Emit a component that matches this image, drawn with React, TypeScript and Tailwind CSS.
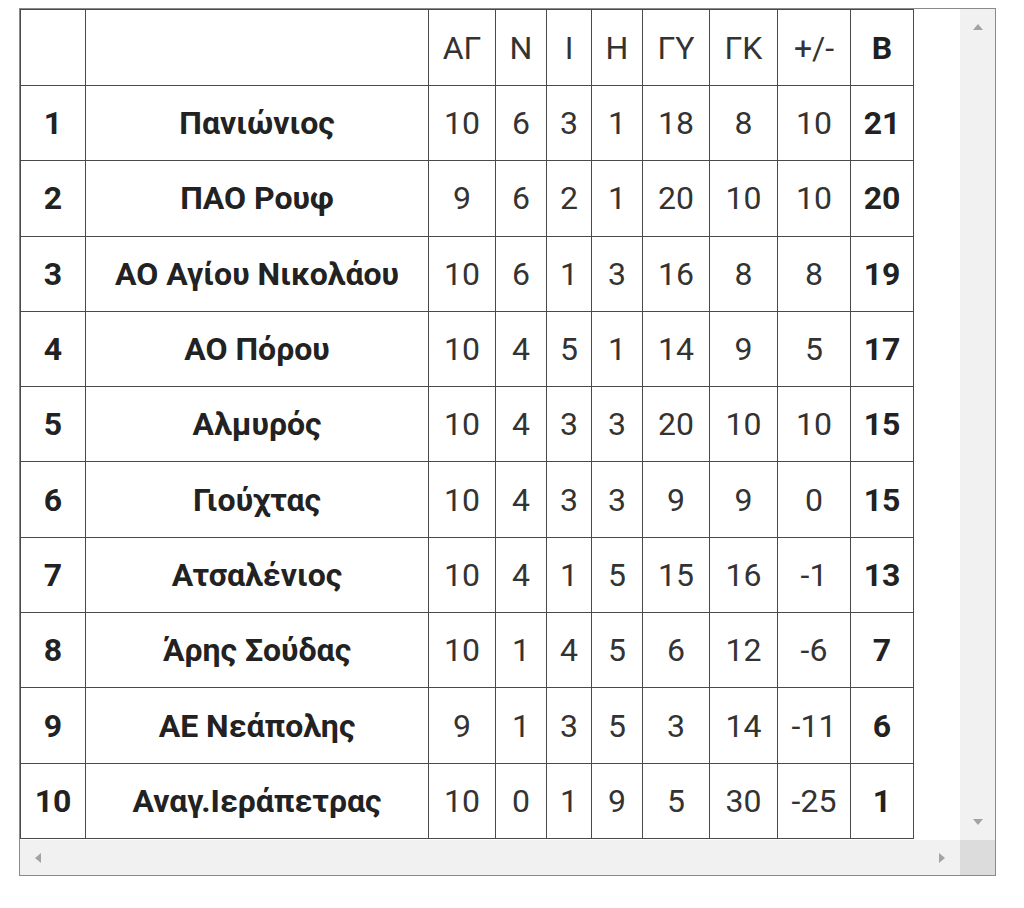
import React from "react";

const rows: [string, string, string, string, string, string, string, string, string, string][] = [
  ["1", "Πανιώνιος", "10", "6", "3", "1", "18", "8", "10", "21"],
  ["2", "ΠΑΟ Ρουφ", "9", "6", "2", "1", "20", "10", "10", "20"],
  ["3", "ΑΟ Αγίου Νικολάου", "10", "6", "1", "3", "16", "8", "8", "19"],
  ["4", "ΑΟ Πόρου", "10", "4", "5", "1", "14", "9", "5", "17"],
  ["5", "Αλμυρός", "10", "4", "3", "3", "20", "10", "10", "15"],
  ["6", "Γιούχτας", "10", "4", "3", "3", "9", "9", "0", "15"],
  ["7", "Ατσαλένιος", "10", "4", "1", "5", "15", "16", "-1", "13"],
  ["8", "Άρης Σούδας", "10", "1", "4", "5", "6", "12", "-6", "7"],
  ["9", "ΑΕ Νεάπολης", "9", "1", "3", "5", "3", "14", "-11", "6"],
  ["10", "Αναγ.Ιεράπετρας", "10", "0", "1", "9", "5", "30", "-25", "1"],
];

const widths = [65, 343, 67, 51, 45, 51, 67, 68, 73, 63];
const headers = ["", "", "ΑΓ", "Ν", "Ι", "Η", "ΓΥ", "ΓΚ", "+/-", "Β"];

const cell = "border border-[#4a4a4a] text-center align-middle p-0";

export default function App() {
  return (
    <div className="w-[1024px] h-[908px] bg-white pt-[8px] pl-[19px]" style={{ fontFamily: "Roboto, 'Noto Sans', sans-serif" }}>
      <div className="w-[977px] border border-[#8a8a8a] grid grid-cols-[1fr_35px] grid-rows-[831px_35px]">
        <div className="bg-white overflow-hidden">
          <table className="border-collapse table-fixed w-[893px] text-[32px] leading-none">
            <colgroup>
              {widths.map((w, i) => (
                <col key={i} style={{ width: w }} />
              ))}
            </colgroup>
            <thead>
              <tr className="h-[76px]">
                {headers.map((h, i) => (
                  <th key={i} className={`${cell} ${i === 9 ? "font-bold text-[#1f1f1f]" : "font-normal text-[#333]"}`}>
                    {h}
                  </th>
                ))}
              </tr>
            </thead>
            <tbody>
              {rows.map((r, ri) => (
                <tr key={ri} className="h-[75.3px]">
                  {r.map((v, ci) => (
                    <td
                      key={ci}
                      className={`${cell} ${ci === 0 || ci === 1 || ci === 9 ? "font-bold text-[#222]" : "font-normal text-[#333]"}`}
                    >
                      {v}
                    </td>
                  ))}
                </tr>
              ))}
            </tbody>
          </table>
        </div>
        <div className="bg-[#f1f1f1] flex flex-col items-center justify-between py-[14px]">
          <svg width="12" height="8" viewBox="0 0 12 8"><polygon points="6,1 11,7 1,7" fill="#a3a3a3" /></svg>
          <svg width="12" height="8" viewBox="0 0 12 8"><polygon points="1,1 11,1 6,7" fill="#a3a3a3" /></svg>
        </div>
        <div className="bg-[#f1f1f1] flex items-center justify-between px-[14px]">
          <svg width="8" height="12" viewBox="0 0 8 12"><polygon points="1,6 7,1 7,11" fill="#a3a3a3" /></svg>
          <svg width="8" height="12" viewBox="0 0 8 12"><polygon points="7,6 1,1 1,11" fill="#a3a3a3" /></svg>
        </div>
        <div className="bg-[#dcdcdc]" />
      </div>
    </div>
  );
}
